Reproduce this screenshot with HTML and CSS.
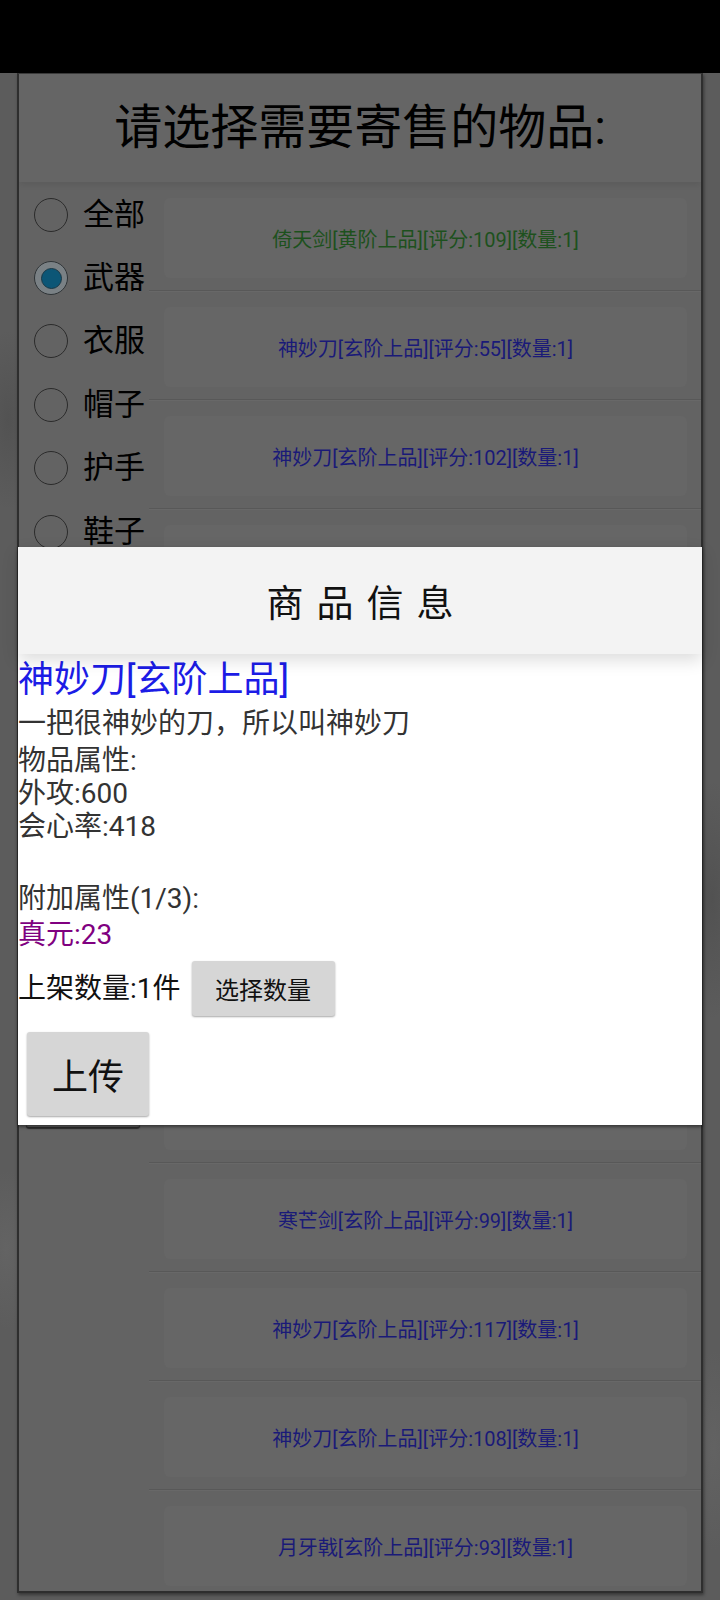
FILE: index.html
```html
<!DOCTYPE html>
<html lang="zh">
<head>
<meta charset="utf-8">
<title>寄售</title>
<link rel="stylesheet" href="styles.css">
</head>
<body>
<div class="statusbar"></div>
<div class="panel">
  <div class="panel-title">请选择需要寄售的物品:</div>
  <div class="panel-body">
    <div class="filters">
      <div class="radio"><span class="dot"></span><span class="label">全部</span></div>
      <div class="radio checked"><span class="dot"><span class="inner"></span></span><span class="label">武器</span></div>
      <div class="radio"><span class="dot"></span><span class="label">衣服</span></div>
      <div class="radio"><span class="dot"></span><span class="label">帽子</span></div>
      <div class="radio"><span class="dot"></span><span class="label">护手</span></div>
      <div class="radio"><span class="dot"></span><span class="label">鞋子</span></div>
      <div class="back-btn"></div>
    </div>
    <div class="items">
      <div class="item"><div class="card huang">倚天剑[黄阶上品][评分:109][数量:1]</div></div>
      <div class="item"><div class="card xuan">神妙刀[玄阶上品][评分:55][数量:1]</div></div>
      <div class="item"><div class="card xuan">神妙刀[玄阶上品][评分:102][数量:1]</div></div>
      <div class="item"><div class="card xuan"></div></div>
      <div class="item"><div class="card xuan"></div></div>
      <div class="item"><div class="card xuan"></div></div>
      <div class="item"><div class="card xuan"></div></div>
      <div class="item"><div class="card xuan"></div></div>
      <div class="item"><div class="card xuan"></div></div>
      <div class="item"><div class="card xuan">寒芒剑[玄阶上品][评分:99][数量:1]</div></div>
      <div class="item"><div class="card xuan">神妙刀[玄阶上品][评分:117][数量:1]</div></div>
      <div class="item"><div class="card xuan">神妙刀[玄阶上品][评分:108][数量:1]</div></div>
      <div class="item"><div class="card xuan">月牙戟[玄阶上品][评分:93][数量:1]</div></div>
    </div>
  </div>
</div>

<div class="dialog">
  <div class="dialog-head">商品信息</div>
  <div class="dialog-body">
    <div class="d-name">神妙刀[玄阶上品]</div>
    <div class="d-desc">一把很神妙的刀，所以叫神妙刀</div>
    <div class="d-stats">物品属性:<br>外攻:600<br>会心率:418<br>&nbsp;</div>
    <div class="d-extra">附加属性(1/3):</div>
    <div class="d-purple">真元:23</div>
    <div class="d-qty">
      <span class="qty-label">上架数量:1件</span>
      <span class="btn btn-small">选择数量</span>
    </div>
    <div class="btn btn-big">上传</div>
  </div>
</div>
</body>
</html>
```

FILE: styles.css
```css
html, body {
  margin: 0;
  padding: 0;
}
body {
  width: 720px;
  height: 1600px;
  overflow: hidden;
  position: relative;
  font-family: Roboto, "Noto Sans CJK SC", sans-serif;
  background-color: #5c5c5c;
  background-image:
    radial-gradient(ellipse 30px 90px at 8px 420px, rgba(60,60,60,0.3), transparent),
    radial-gradient(ellipse 30px 120px at 712px 900px, rgba(50,50,50,0.25), transparent),
    radial-gradient(ellipse 30px 80px at 6px 1250px, rgba(110,110,110,0.4), transparent),
    radial-gradient(ellipse 30px 100px at 714px 1450px, rgba(110,110,110,0.35), transparent);
}

.statusbar {
  height: 73px;
  background: #000;
}

.panel {
  margin-left: 17px;
  width: 686px;
  height: 1520px;
  box-sizing: border-box;
  border: 2px solid #2e2e2e;
  border-top: 1px solid #3a3a3a;
  background: #636363;
  overflow: hidden;
  box-shadow: 1px 2px 3px rgba(0,0,0,0.4);
}

.panel-title {
  height: 108px;
  box-sizing: border-box;
  padding-top: 26px;
  text-align: center;
  font-size: 48px;
  line-height: 56px;
  color: #000;
  background: #656565;
  box-shadow: 0 3px 6px rgba(0,0,0,0.08);
  position: relative;
}

.panel-body {
  display: flex;
}

.filters {
  width: 130px;
  flex: none;
  display: flex;
  flex-direction: column;
  padding-top: 1px;
}

.radio {
  height: 63.4px;
  display: flex;
  align-items: center;
  padding-left: 15px;
}
.dot {
  width: 34px;
  height: 34px;
  box-sizing: border-box;
  border: 1.5px solid #2b2b2b;
  border-radius: 50%;
  flex: none;
  display: flex;
  align-items: center;
  justify-content: center;
}
.radio.checked .dot {
  background: #7a8185;
  border-color: #2f3437;
}
.inner {
  width: 21px;
  height: 21px;
  box-sizing: border-box;
  border-radius: 50%;
  background: #0c5676;
  border: 1px solid #1a3846;
}
.label {
  margin-left: 15px;
  font-size: 31px;
  line-height: 40px;
  color: #000;
  white-space: nowrap;
}

.back-btn {
  margin-left: 7px;
  margin-top: 484px;
  width: 114px;
  height: 80px;
  background: #5e5e5e;
  border-radius: 3px;
  box-shadow: 0 2px 1px #2c2c2c;
}

.items {
  flex: 1;
}

.item {
  padding: 16px 14px 12px 15px;
  border-bottom: 1px solid #585858;
  box-shadow: 0 1px 0 #686868;
}

.card {
  height: 80px;
  border-radius: 6px;
  background: #666666;
  display: flex;
  align-items: center;
  justify-content: center;
  font-size: 20px;
  white-space: nowrap;
}
.card.huang { color: #1d511d; }
.card.xuan { color: #1a1a78; }

.dialog {
  position: absolute;
  left: 18px;
  top: 547px;
  width: 684px;
  height: 578px;
  background: #fff;
  display: flex;
  flex-direction: column;
  box-shadow: 0 2px 3px rgba(0,0,0,0.45);
}

.dialog-head {
  height: 107px;
  flex: none;
  background: #f3f3f3;
  display: flex;
  align-items: center;
  justify-content: center;
  font-size: 37px;
  letter-spacing: 13px;
  text-indent: 13px;
  color: #111;
  position: relative;
  z-index: 1;
  box-shadow: 0 6px 16px rgba(0,0,0,0.14);
}

.dialog-body {
  flex: 1;
  display: flex;
  flex-direction: column;
  align-items: flex-start;
  color: #333;
}

.d-name {
  font-size: 36px;
  line-height: 52px;
  color: #1c1ce6;
}
.d-desc {
  font-size: 28px;
  line-height: 36px;
}
.d-stats {
  margin-top: 2px;
  font-size: 28px;
  line-height: 33px;
}
.d-extra {
  margin-top: 6px;
  font-size: 28px;
  line-height: 33px;
}
.d-purple {
  margin-top: 3px;
  font-size: 28px;
  line-height: 33px;
  color: #800080;
}

.d-qty {
  margin-top: 10px;
  display: flex;
  align-items: center;
}
.qty-label {
  font-size: 28px;
  line-height: 36px;
  color: #111;
}

.btn {
  background: #d6d6d6;
  border-radius: 3px;
  box-shadow: 0 1px 2px rgba(0,0,0,0.35);
  color: #111;
  display: flex;
  align-items: center;
  justify-content: center;
}
.btn-small {
  margin-left: 11px;
  width: 143px;
  height: 55px;
  font-size: 24px;
}
.btn-big {
  margin-left: 9px;
  margin-top: 16px;
  width: 122px;
  height: 84px;
  font-size: 36px;
}
```
